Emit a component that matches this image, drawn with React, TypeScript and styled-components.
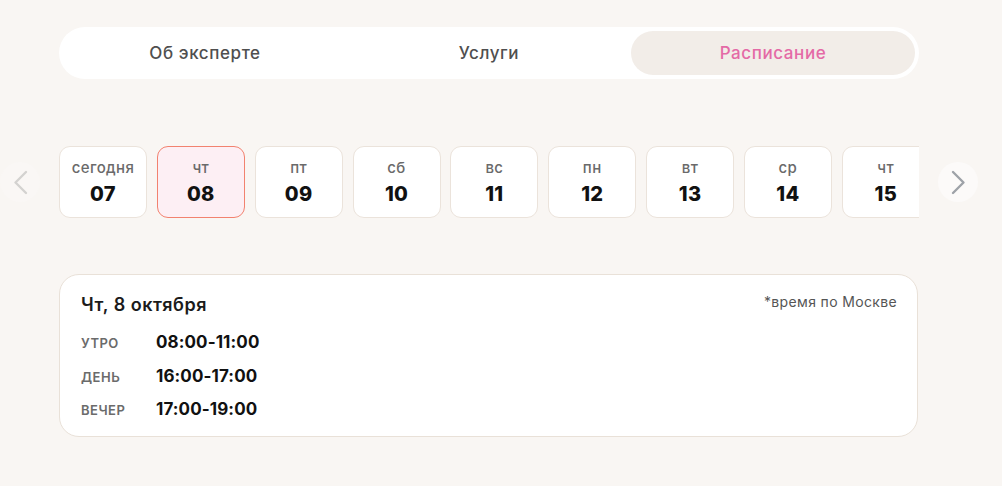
import React from "react";
import styled, { createGlobalStyle } from "styled-components";

const Global = createGlobalStyle`
  html, body { margin: 0; padding: 0; background: #f9f6f3; }
  body { font-family: Inter, "Noto Sans", sans-serif; -webkit-font-smoothing: antialiased; }
`;

const Page = styled.div`
  width: 1002px;
  height: 486px;
  box-sizing: border-box;
  padding-top: 27px;
  background: #f9f6f3;
  display: flex;
  flex-direction: column;
`;

const Column = styled.div`
  margin-left: 59px;
  width: 860px;
`;

const Tabs = styled.div`
  box-sizing: border-box;
  height: 52px;
  padding: 4px;
  background: #ffffff;
  border-radius: 26px;
  display: grid;
  grid-template-columns: 1fr 1fr 1fr;
`;

const Tab = styled.div<{ $active?: boolean }>`
  border-radius: 22px;
  display: flex;
  align-items: center;
  justify-content: center;
  font-size: 17px;
  font-weight: 500;
  letter-spacing: 0.6px;
  color: ${(p) => (p.$active ? "#e46aa6" : "#4f4f4f")};
  background: ${(p) => (p.$active ? "#f2ede8" : "transparent")};
`;

const DateRow = styled.div`
  margin-top: 67px;
  display: flex;
  align-items: center;
  gap: 19px;
`;

const Arrow = styled.div<{ $disabled?: boolean }>`
  width: 40px;
  height: 40px;
  border-radius: 50%;
  flex: none;
  display: flex;
  align-items: center;
  justify-content: center;
  background: ${(p) => (p.$disabled ? "#faf7f5" : "#fcfaf9")};
  color: ${(p) => (p.$disabled ? "#d4d2d0" : "#9ea2a8")};
`;

const Scroller = styled.div`
  width: 860px;
  overflow: hidden;
  display: flex;
  gap: 9.85px;
  flex: none;
`;

const DayCard = styled.div<{ $active?: boolean }>`
  box-sizing: border-box;
  flex: none;
  width: 88px;
  height: 72px;
  border-radius: 11px;
  border: 1.5px solid ${(p) => (p.$active ? "#f2826f" : "#ebe3db")};
  background: ${(p) => (p.$active ? "#fdeff4" : "#ffffff")};
  display: flex;
  flex-direction: column;
  align-items: center;
  padding-top: 11px;
`;

const DayName = styled.div`
  font-size: 15px;
  font-weight: 500;
  letter-spacing: 0.4px;
  color: #6a6a6a;
  line-height: 19px;
`;

const DayNum = styled.div`
  margin-top: 5px;
  font-size: 20px;
  font-weight: 800;
  letter-spacing: 0.3px;
  color: #111;
  line-height: 24px;
`;

const Schedule = styled.div`
  box-sizing: border-box;
  margin-top: 56px;
  width: 859px;
  height: 163px;
  background: #ffffff;
  border: 1.5px solid #e9e1d8;
  border-radius: 20px;
  padding: 18px 20px 0 21px;
`;

const Head = styled.div`
  display: flex;
  justify-content: space-between;
  align-items: flex-start;
`;

const Title = styled.div`
  font-size: 18px;
  font-weight: 600;
  letter-spacing: 0.5px;
  color: #1b1b1b;
  line-height: 24px;
`;

const Note = styled.div`
  font-size: 14px;
  letter-spacing: 0.35px;
  color: #555;
  line-height: 17px;
`;

const Slots = styled.div`
  margin-top: 14px;
  display: grid;
  grid-template-columns: 75px auto;
  row-gap: 11.5px;
  align-items: center;
`;

const SlotLabel = styled.div`
  font-size: 13px;
  font-weight: 600;
  letter-spacing: 0.5px;
  color: #6b6b6b;
  text-transform: uppercase;
  line-height: 22px;
  padding-top: 1px;
  margin-bottom: -1px;
`;

const SlotTime = styled.div`
  font-size: 17px;
  font-weight: 700;
  letter-spacing: 0.1px;
  color: #111;
  line-height: 22px;
`;

const Chevron = ({ dir }: { dir: "left" | "right" }) => (
  <svg width="15" height="25" viewBox="0 0 15 25" fill="none">
    <polyline
      points={dir === "left" ? "13,2 2.5,12.5 13,23" : "2,2 12.5,12.5 2,23"}
      stroke="currentColor"
      strokeWidth="2.4"
      strokeLinecap="round"
      strokeLinejoin="round"
    />
  </svg>
);

const days = [
  ["сегодня", "07"],
  ["чт", "08"],
  ["пт", "09"],
  ["сб", "10"],
  ["вс", "11"],
  ["пн", "12"],
  ["вт", "13"],
  ["ср", "14"],
  ["чт", "15"],
];

const slots = [
  ["утро", "08:00-11:00"],
  ["день", "16:00-17:00"],
  ["вечер", "17:00-19:00"],
];

export default function App() {
  return (
    <Page>
      <Global />
      <Column>
        <Tabs>
          <Tab>Об эксперте</Tab>
          <Tab>Услуги</Tab>
          <Tab $active>Расписание</Tab>
        </Tabs>
      </Column>
      <DateRow>
        <Arrow $disabled>
          <Chevron dir="left" />
        </Arrow>
        <Scroller>
          {days.map(([n, d], i) => (
            <DayCard key={i} $active={i === 1}>
              <DayName>{n}</DayName>
              <DayNum>{d}</DayNum>
            </DayCard>
          ))}
        </Scroller>
        <Arrow>
          <Chevron dir="right" />
        </Arrow>
      </DateRow>
      <Column>
        <Schedule>
          <Head>
            <Title>Чт, 8 октября</Title>
            <Note>*время по Москве</Note>
          </Head>
          <Slots>
            {slots.map(([l, t]) => (
              <React.Fragment key={l}>
                <SlotLabel>{l}</SlotLabel>
                <SlotTime>{t}</SlotTime>
              </React.Fragment>
            ))}
          </Slots>
        </Schedule>
      </Column>
    </Page>
  );
}
